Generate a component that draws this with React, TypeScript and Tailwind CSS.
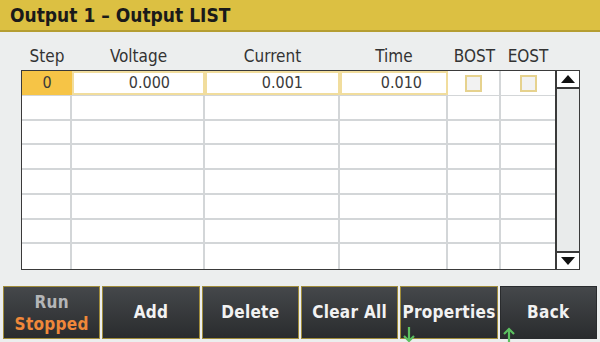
const cols = ["w-[50px]", "w-[133px]", "w-[135px]", "w-[108px]", "w-[53px]", "w-[54px]"];

function Checkbox() {
  return <div className="h-[17px] w-[17px] border-2 border-[#e6d28e] bg-[#f2f2f2]" />;
}

function UpArrow() {
  return (
    <svg width="16" height="10" viewBox="0 0 16 10">
      <polygon points="8,1 15,9 1,9" fill="#111" />
    </svg>
  );
}

function DownArrow() {
  return (
    <svg width="16" height="10" viewBox="0 0 16 10">
      <polygon points="1,1 15,1 8,9" fill="#111" />
    </svg>
  );
}

function GreenArrow({ up }: { up?: boolean }) {
  return (
    <svg width="14" height="16" viewBox="0 0 14 16" className="absolute bottom-[-5px] left-[1px]">
      {up ? (
        <path d="M7 16V2M2 7l5-5 5 5" stroke="#5cc060" strokeWidth="2.2" fill="none" />
      ) : (
        <path d="M7 0v14M2 9l5 5 5-5" stroke="#5cc060" strokeWidth="2.2" fill="none" />
      )}
    </svg>
  );
}

export default function App() {
  const emptyRows = Array.from({ length: 7 });

  return (
    <div
      className="flex h-[342px] w-[600px] flex-col bg-[#eceeee] overflow-hidden"
      style={{ fontFamily: '"DejaVu Sans Condensed", "DejaVu Sans", sans-serif' }}
    >
      {/* Title bar */}
      <div className="flex h-[32px] items-center border-b-2 border-[#b59e32] bg-[#dcc042] pl-[10px]">
        <span className="text-[19px] font-bold text-[#1a1a1a]">Output 1 – Output LIST</span>
      </div>

      {/* Column labels */}
      <div className="ml-[22px] mt-[11px] flex h-[27px] items-center text-[17px] text-[#333]">
        <div className={`${cols[0]} text-center`}>Step</div>
        <div className={`${cols[1]} text-center`}>Voltage</div>
        <div className={`${cols[2]} text-center`}>Current</div>
        <div className={`${cols[3]} text-center`}>Time</div>
        <div className={`${cols[4]} text-center`}>BOST</div>
        <div className={`${cols[5]} text-center`}>EOST</div>
      </div>

      {/* Table */}
      <div className="ml-[21px] flex h-[200px] w-[559px] border border-[#3a3a3a] bg-white">
        <div className="flex flex-col">
          {/* Selected row */}
          <div className="flex h-[25px] border-b border-[#d3d6d8] text-[16px] text-[#3a3a3a]">
            <div className={`${cols[0]} flex items-center justify-center bg-[#f6c446]`}>0</div>
            <div className={`${cols[1]} flex items-center justify-end border-2 border-[#f1dd9d] pr-[33px]`}>0.000</div>
            <div className={`${cols[2]} flex items-center justify-end border-2 border-[#f1dd9d] pr-[35px]`}>0.001</div>
            <div className={`${cols[3]} flex items-center justify-end border-2 border-[#f1dd9d] pr-[24px]`}>0.010</div>
            <div className={`${cols[4]} flex items-center justify-center border-r-2 border-[#d3d6d8]`}>
              <Checkbox />
            </div>
            <div className={`${cols[5]} flex items-center justify-center`}>
              <Checkbox />
            </div>
          </div>
          {emptyRows.map((_, i) => (
            <div key={i} className={`flex h-[25px] ${i < 6 ? "border-b-2" : ""} border-[#d3d6d8]`}>
              <div className={`${cols[0]} border-r-2 border-[#d3d6d8]`} />
              <div className={`${cols[1]} border-r-2 border-[#d3d6d8]`} />
              <div className={`${cols[2]} border-r-2 border-[#d3d6d8]`} />
              <div className={`${cols[3]} border-r-2 border-[#d3d6d8]`} />
              <div className={`${cols[4]} border-r-2 border-[#d3d6d8]`} />
              <div className={cols[5]} />
            </div>
          ))}
        </div>

        {/* Scrollbar */}
        <div className="flex w-[25px] flex-col border-l-2 border-[#3a3a3a] bg-[#e9ebeb]">
          <div className="flex h-[18px] items-center justify-center border-b-2 border-[#3a3a3a] bg-white">
            <UpArrow />
          </div>
          <div className="flex-1" />
          <div className="flex h-[18px] items-center justify-center border-t-2 border-[#3a3a3a] bg-white">
            <DownArrow />
          </div>
        </div>
      </div>

      {/* Softkeys */}
      <div className="mt-[16px] flex h-[53px] gap-[2px] px-[3px] text-[17px] font-bold tracking-[0.3px] text-[#f2f2f2]">
        <button className="flex flex-1 flex-col items-center justify-center border border-[#a08c3a] bg-gradient-to-b from-[#45484b] to-[#2a2c2e] leading-[22px]">
          <span className="text-[#b4b6b8]">Run</span>
          <span className="text-[#f0883a]">Stopped</span>
        </button>
        <button className="flex flex-1 items-center justify-center border border-[#a08c3a] bg-gradient-to-b from-[#45484b] to-[#2a2c2e]">
          Add
        </button>
        <button className="flex flex-1 items-center justify-center border border-[#a08c3a] bg-gradient-to-b from-[#45484b] to-[#2a2c2e]">
          Delete
        </button>
        <button className="flex flex-1 items-center justify-center border border-[#a08c3a] bg-gradient-to-b from-[#45484b] to-[#2a2c2e]">
          Clear All
        </button>
        <button className="relative flex flex-1 items-center justify-center border border-[#a08c3a] bg-gradient-to-b from-[#45484b] to-[#2a2c2e]">
          Properties
          <GreenArrow />
        </button>
        <button className="relative flex flex-1 items-center justify-center border border-[#2a2c2e] bg-gradient-to-b from-[#45484b] to-[#2a2c2e]">
          Back
          <GreenArrow up />
        </button>
      </div>
    </div>
  );
}
